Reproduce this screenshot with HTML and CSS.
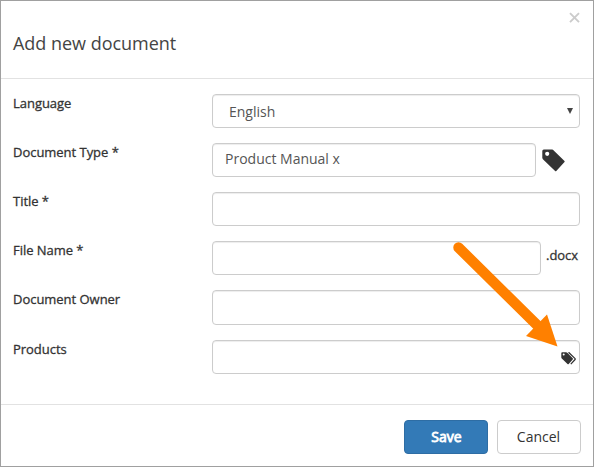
FILE: index.html
```html
<!DOCTYPE html>
<html lang="en">
<head>
<meta charset="utf-8">
<title>Add new document</title>
<link rel="stylesheet" href="styles.css">
</head>
<body>
<div class="dialog">
  <header class="header">
    <h1 class="title">Add new document</h1>
    <button class="close" type="button" aria-label="Close"><svg width="11" height="11" viewBox="0 0 11 11"><path d="M1 1.200l9 9M10 1.200l-9 9" stroke="#ccc" stroke-width="1.900"/></svg></button>
  </header>
  <main class="form">
    <div class="row"><span class="label">Language</span><div class="field select"><span>English</span><svg width="6" height="6" viewBox="0 0 6 6"><path d="M0 0h6L3 6z" fill="#444"/></svg></div></div>
    <div class="row"><span class="label">Document Type *</span><div class="field type"><span>Product Manual x</span></div><svg class="tag" width="23" height="23" viewBox="0 0 23 23"><path fill="#333" fill-rule="evenodd" d="M1.800 0.500H10.300L11.200 1L22.500 12Q22.900 12.500 22.500 13L14.300 22Q13.700 22.500 13.100 22L0.900 10.300L0.300 8.900V2Q0.300 0.500 1.800 0.500zM5.200 2.700a2.100 2.100 0 1 0 0 4.200a2.100 2.100 0 1 0 0-4.200z"/></svg></div>
    <div class="row"><span class="label">Title *</span><div class="field"></div></div>
    <div class="row"><span class="label">File Name *</span><div class="field file"></div><span class="suffix">.docx</span></div>
    <div class="row owner"><span class="label">Document Owner</span><div class="field"></div></div>
    <div class="row"><span class="label">Products</span><div class="field products"><svg width="15" height="13" viewBox="0 0 15 13"><path fill="#333" fill-rule="evenodd" d="M1.200.3h3.900q.7 0 1.200.5l5.400 5.400q.6.6 0 1.200l-4 4.600q-.6.6-1.200 0L.8 6.600Q.3 6 .3 5.200V1.200Q.3.3 1.200.3zM2.700 1.500a1 1 0 1 0 0 2a1 1 0 1 0 0-2z"/><path fill="none" stroke="#333" stroke-width="1.200" d="M7.400 .7h.6l6.100 5.900q.4.4 0 .9l-4.300 4.700"/></svg></div></div>
  </main>
  <footer class="footer">
    <button class="btn save" type="button">Save</button>
    <button class="btn" type="button">Cancel</button>
  </footer>
  <svg class="arrow" width="594" height="467" viewBox="0 0 594 467"><path d="M458.500 247.500L537 325" stroke="#ff8000" stroke-width="10.500" stroke-linecap="round"/><path d="M547 314.500L557.500 346.500L526 336z" fill="#ff8000"/></svg>
</div>
</body>
</html>
```
FILE: styles.css
```css
* { box-sizing: border-box; }
body { margin: 0; font-family: "Open Sans", sans-serif; font-size: 14px; color: #555; }
.dialog { position: relative; width: 594px; height: 467px; border: 1px solid #a0a0a0; background: #fff; display: flex; flex-direction: column; }
.header { height: 78px; border-bottom: 1px solid #e2e2e2; padding: 11px 13px 0 12px; display: flex; justify-content: space-between; align-items: flex-start; }
.title { margin: 18px 0 0; font-size: 18px; line-height: 26px; font-weight: 400; color: #444; letter-spacing: -0.02px; }
.close { border: 0; padding: 0; background: none; display: flex; }
.form { height: 325px; padding: 15px 13px 0 12px; display: flex; flex-direction: column; gap: 15px; }
.row { display: flex; height: 34px; flex-shrink: 0; }
.owner { height: 35px; }
.label { width: 199px; flex-shrink: 0; }
.label, .suffix { font-size: 13px; line-height: 19px; color: #333; -webkit-text-stroke: 0.3px #333; letter-spacing: -0.03px; }
.field { flex: 1; border: 1px solid #ccc; border-radius: 4px; box-shadow: inset 0 1px 1px rgba(0,0,0,.075); line-height: 20px; }
.select { display: flex; align-items: center; justify-content: space-between; padding: 2px 6px 0 16px; }
.select svg { margin-bottom: 2px; }
.type { flex: 0 0 324px; padding: 5px 12px; }
.tag { margin: 6px 0 0 6px; }
.file { flex: 0 0 329px; }
.suffix { margin: 5px 0 0 5px; }
.products { display: flex; justify-content: flex-end; padding: 11px 3px 0 0; }
.footer { flex: 1; border-top: 1px solid #e2e2e2; display: flex; justify-content: flex-end; gap: 9px; padding: 15px 12px 0 0; }
.btn { width: 84px; height: 34px; border: 1px solid #ccc; border-radius: 4px; background: #fff; color: #333; font: 14px/20px "Open Sans", sans-serif; padding: 0 1px 1px 0; }
.save { background: #337ab7; border-color: #2e6da4; color: #fff; -webkit-text-stroke: 0.8px #fff; padding: 0 0 1px 1px; }
.arrow { position: absolute; left: -1px; top: -1px; pointer-events: none; }
```
